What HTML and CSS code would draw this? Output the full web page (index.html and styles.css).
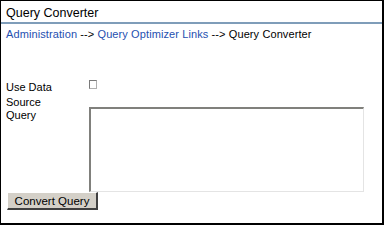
FILE: index.html
```html
<!DOCTYPE html>
<html lang="en">
<head>
    <meta charset="UTF-8">
    <title>Query Converter</title>
    <link rel="stylesheet" href="styles.css">
</head>
<body>
    <div class="panel">
        <h1 class="title">Query Converter</h1>
        <div class="crumbs">
            <a href="#">Administration</a> --&gt; <a href="#">Query Optimizer Links</a> --&gt; Query Converter
        </div>

        <form class="form">
            <div class="row row-check">
                <label class="label" for="use-ds">Use Data Source</label>
                <input type="checkbox" id="use-ds" class="check">
            </div>
            <div class="row">
                <label class="label label-query" for="query">Query</label>
                <textarea id="query" class="query"></textarea>
            </div>
            <button type="button" class="btn">Convert Query</button>
        </form>
    </div>
</body>
</html>
```

FILE: styles.css
```css
body {
    margin: 0;
    padding: 0;
    background: #fff;
    font-family: 'Liberation Sans', Arial, sans-serif;
    font-size: 11px;
    color: #000;
}

.panel {
    box-sizing: border-box;
    width: 384px;
    height: 225px;
    border: 1px solid #000;
    border-right-width: 2px;
    border-bottom-width: 2px;
}

.title {
    margin: 0;
    padding: 6px 5px 2px;
    font-size: 12.5px;
    font-weight: normal;
    line-height: 13px;
    color: #000;
    border-bottom: 2px solid #7f9db9;
}

.crumbs {
    padding: 3px 5px 0;
    line-height: 14px;
    letter-spacing: 0.1px;
}

.crumbs a {
    color: #2550b0;
    text-decoration: none;
}

.form {
    margin-top: 39px;
    padding-left: 5px;
}

.row {
    display: grid;
    grid-template-columns: 83px auto;
    align-items: start;
}

.row-check {
    height: 27px;
}

.label {
    width: 60px;
    line-height: 15px;
}

.label-query {
    padding-top: 1px;
}

.check {
    appearance: none;
    box-sizing: border-box;
    width: 8px;
    height: 9px;
    margin: 0;
    border: 1px solid #7a7a7a;
    border-right-color: #b0b0b0;
    border-bottom-color: #b0b0b0;
    background: #fff;
}

.query {
    box-sizing: border-box;
    width: 275px;
    height: 85px;
    margin: 0;
    padding: 0;
    resize: none;
    border-style: solid;
    border-width: 2px 1px 1px 2px;
    border-color: #80807c #e4e4e4 #e4e4e4 #80807c;
    background: #fff;
}

.btn {
    display: block;
    box-sizing: border-box;
    width: 91px;
    height: 18px;
    margin: 0 0 0 1px;
    padding: 0;
    font-family: 'Liberation Sans', Arial, sans-serif;
    font-size: 11.5px;
    color: #000;
    background: #d4d0c8;
    border-style: solid;
    border-width: 1px 2px 2px 1px;
    border-color: #fff #404040 #404040 #fff;
}
```
